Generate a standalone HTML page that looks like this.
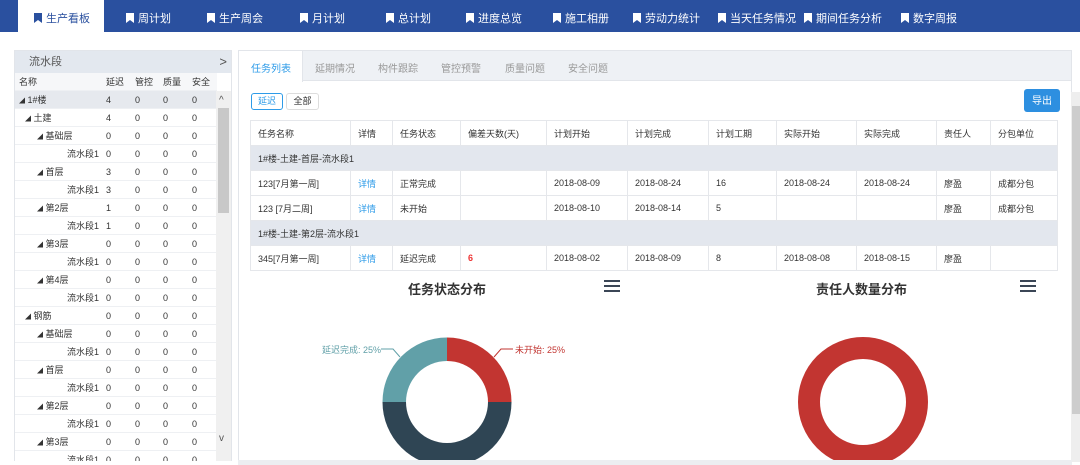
<!DOCTYPE html>
<html><head><meta charset="utf-8"><style>
*{margin:0;padding:0;box-sizing:border-box}
body{width:1080px;height:465px;overflow:hidden;background:#fff;font-family:"Liberation Sans","Noto Sans CJK SC",sans-serif;font-size:10px;color:#333;position:relative}
.nav{position:absolute;left:0;top:0;width:1080px;height:32px;background:#2a509f}
.nav div{position:absolute;top:0;height:32px;line-height:38px;color:#fff;font-size:11px;white-space:nowrap}
.nav div.act{background:#fff;color:#2a509f}
.bm{display:inline-block;width:8px;height:10px;background:currentColor;margin-right:4px;vertical-align:-1px;clip-path:polygon(0 0,100% 0,100% 100%,50% 70%,0 100%)}
.abs{position:absolute}
.lp{left:14px;top:50px;width:218px;height:412px;border:1px solid #e2e5ea;background:#fff;overflow:hidden}
.tr{position:absolute;left:0;width:202px;height:18px;border-bottom:1px solid #eef0f3;line-height:18px;font-size:9px}
.tr span{position:absolute;top:0}
.rp{left:238px;top:50px;width:834px;height:411px;border:1px solid #e2e5ea}
table{border-collapse:collapse;position:absolute;left:250px;top:120px;width:808px;font-size:9px}
td{border:1px solid #e5e7eb;padding-left:7px;height:25px;white-space:nowrap}
tr.g td{background:#e3e7ee}
.lk{color:#2d9be8}
</style></head><body>
<div class="nav">
<div class="act" style="left:18px;width:86px;padding-left:16px"><i class="bm"></i>生产看板</div>
<div style="left:126px"><i class="bm"></i>周计划</div>
<div style="left:207px"><i class="bm"></i>生产周会</div>
<div style="left:300px"><i class="bm"></i>月计划</div>
<div style="left:386px"><i class="bm"></i>总计划</div>
<div style="left:466px"><i class="bm"></i>进度总览</div>
<div style="left:553px"><i class="bm"></i>施工相册</div>
<div style="left:633px"><i class="bm"></i>劳动力统计</div>
<div style="left:718px"><i class="bm"></i>当天任务情况</div>
<div style="left:804px"><i class="bm"></i>期间任务分析</div>
<div style="left:901px"><i class="bm"></i>数字周报</div>
</div>

<div class="abs lp">
<div class="abs" style="left:0;top:0;width:216px;height:22px;background:#e3e8ef;line-height:22px;padding-left:14px;font-size:11px;color:#555">流水段<span style="position:absolute;right:4px;font-size:13px">&gt;</span></div>
<div class="tr" style="top:22px;background:#f6f7f9"><span style="left:4px">名称</span><span style="left:91px">延迟</span><span style="left:120px">管控</span><span style="left:148px">质量</span><span style="left:177px">安全</span></div>
<div id="rows"></div>
<div class="abs" style="left:201px;top:40px;width:15px;height:372px;background:#f0f0f0"></div>
<div class="abs" style="left:203px;top:57px;width:11px;height:105px;background:#c8c8c8"></div>
<div class="abs" style="left:204px;top:44px;font-size:10px;color:#555">^</div>
<div class="abs" style="left:204px;top:382px;font-size:10px;color:#555">v</div>
</div>

<div class="abs rp">
<div class="abs" style="left:0;top:0;width:832px;height:30px;background:#eef1f5;border-bottom:1px solid #e2e5ea"></div>
<div class="abs" style="left:0;top:0;width:64px;height:31px;background:#fff;border-right:1px solid #e2e5ea"></div>
<div class="abs" style="left:12px;top:9px;font-size:10px;color:#2d9be8">任务列表</div>
<div class="abs" style="left:76px;top:9px;font-size:10px;color:#999">延期情况</div>
<div class="abs" style="left:139px;top:9px;font-size:10px;color:#999">构件跟踪</div>
<div class="abs" style="left:202px;top:9px;font-size:10px;color:#999">管控预警</div>
<div class="abs" style="left:266px;top:9px;font-size:10px;color:#999">质量问题</div>
<div class="abs" style="left:329px;top:9px;font-size:10px;color:#999">安全问题</div>
<div class="abs" style="left:12px;top:42px;width:32px;height:17px;border:1px solid #2d9be8;border-radius:3px;color:#2d9be8;font-size:9px;text-align:center;line-height:15px">延迟</div>
<div class="abs" style="left:47px;top:42px;width:33px;height:17px;border:1px solid #ddd;border-radius:3px;font-size:9px;text-align:center;line-height:15px">全部</div>
<div class="abs" style="left:785px;top:38px;width:36px;height:23px;background:#2d8fe0;border-radius:3px;color:#fff;font-size:10px;text-align:center;line-height:23px;padding-top:0"><span style="position:relative;top:1px">导出</span></div>
</div>
<div class="abs" style="left:1071px;top:92px;width:9px;height:370px;background:#eee"></div>
<div class="abs" style="left:1072px;top:106px;width:8px;height:308px;background:#cdcdcd"></div>

<table>
<tr style="background:#fff"><td style="width:100px">任务名称</td><td style="width:42px">详情</td><td style="width:68px">任务状态</td><td style="width:86px">偏差天数(天)</td><td style="width:81px">计划开始</td><td style="width:81px">计划完成</td><td style="width:68px">计划工期</td><td style="width:80px">实际开始</td><td style="width:80px">实际完成</td><td style="width:54px">责任人</td><td>分包单位</td></tr>
<tr class="g"><td colspan="11">1#楼-土建-首层-流水段1</td></tr>
<tr><td>123[7月第一周]</td><td class="lk">详情</td><td>正常完成</td><td></td><td>2018-08-09</td><td>2018-08-24</td><td>16</td><td>2018-08-24</td><td>2018-08-24</td><td>廖盈</td><td>成都分包</td></tr>
<tr><td>123 [7月二周]</td><td class="lk">详情</td><td>未开始</td><td></td><td>2018-08-10</td><td>2018-08-14</td><td>5</td><td></td><td></td><td>廖盈</td><td>成都分包</td></tr>
<tr class="g"><td colspan="11">1#楼-土建-第2层-流水段1</td></tr>
<tr><td>345[7月第一周]</td><td class="lk">详情</td><td>延迟完成</td><td style="color:#e33;font-weight:bold">6</td><td>2018-08-02</td><td>2018-08-09</td><td>8</td><td>2018-08-08</td><td>2018-08-15</td><td>廖盈</td><td></td></tr>
</table>

<div class="abs" style="left:408px;top:279px;font-size:13px;font-weight:bold;color:#333">任务状态分布</div>
<div class="abs" style="left:816px;top:279px;font-size:13px;font-weight:bold;color:#333">责任人数量分布</div>
<svg class="abs" style="left:0;top:0" width="1080" height="461" viewBox="0 0 1080 461">
<g stroke="#3b4656" stroke-width="2"><path d="M604 281h16M604 286h16M604 291h16M1020 281h16M1020 286h16M1020 291h16"/></g>
<path d="M447 402 L447 337.5 A64.5 64.5 0 0 1 511.5 402 Z" fill="#c23531"/>
<path d="M447 402 L382.5 402 A64.5 64.5 0 0 1 447 337.5 Z" fill="#61a0a8"/>
<path d="M382.5 402 A64.5 64.5 0 0 0 511.5 402 Z" fill="#2f4554"/>
<circle cx="447" cy="402" r="41" fill="#fff"/>
<path d="M381 349 h12 l7 8" fill="none" stroke="#61a0a8"/>
<path d="M513 349 h-12 l-7 8" fill="none" stroke="#c23531"/>
<text x="322" y="353" font-size="9" fill="#61a0a8" font-family="Liberation Sans,Noto Sans CJK SC,sans-serif">延迟完成: 25%</text>
<text x="515" y="353" font-size="9" fill="#c23531" font-family="Liberation Sans,Noto Sans CJK SC,sans-serif">未开始: 25%</text>
<circle cx="863" cy="402" r="54" fill="none" stroke="#c23531" stroke-width="22"/>
</svg>
<div class="abs" style="left:238px;top:460px;width:834px;height:5px;background:#eceef1"></div>
<div class="abs" style="left:0;top:461px;width:238px;height:4px;background:#fff"></div>

<script>
var r=[["1#楼",4,4],["土建",4,10],["基础层",0,22],["流水段1",0,0],["首层",3,22],["流水段1",3,0],["第2层",1,22],["流水段1",1,0],["第3层",0,22],["流水段1",0,0],["第4层",0,22],["流水段1",0,0],["钢筋",0,10],["基础层",0,22],["流水段1",0,0],["首层",0,22],["流水段1",0,0],["第2层",0,22],["流水段1",0,0],["第3层",0,22],["流水段1",0,0]];
var h="";r.forEach(function(x,i){var nm=x[2]?'<span style="left:'+x[2]+'px">◢ '+x[0]+'</span>':'<span style="left:52px">'+x[0]+'</span>';
h+='<div class="tr" style="top:'+(40+i*18)+'px;'+(i==0?'background:#e6e9ee':'')+'">'+nm.replace('◢','<small style="font-size:6px">◢</small>')+'<span style="left:91px">'+x[1]+'</span><span style="left:120px">0</span><span style="left:148px">0</span><span style="left:177px">0</span></div>';});
document.getElementById("rows").innerHTML=h;
</script>
</body></html>
